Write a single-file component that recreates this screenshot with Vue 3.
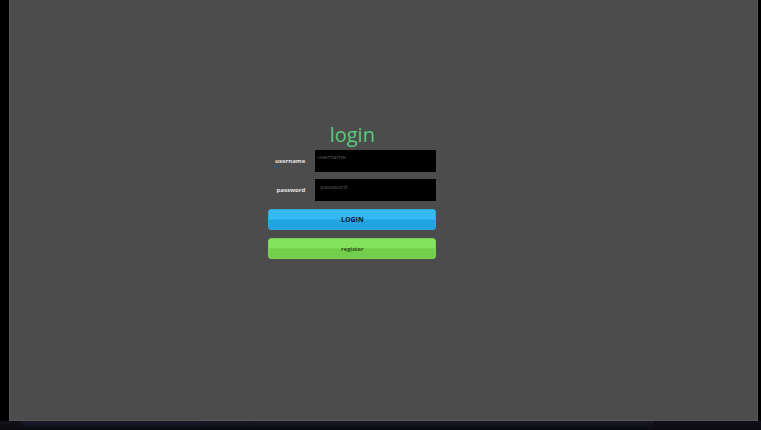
<template>
  <div class="screen">
    <main class="panel">
      <form class="login-form" @submit.prevent>
        <h1 class="title">login</h1>

        <div class="fields">
          <div class="field">
            <label for="username">username</label>
            <input id="username" v-model="username" type="text" placeholder="username" />
          </div>
          <div class="field">
            <label for="password">password</label>
            <input
              id="password"
              v-model="password"
              class="indented"
              type="password"
              placeholder="password"
            />
          </div>
        </div>

        <div class="actions">
          <button class="btn btn-login" type="submit">LOGIN</button>
          <button class="btn btn-register" type="button">register</button>
        </div>
      </form>
    </main>
    <div class="bottom-bar"></div>
  </div>
</template>

<script setup>
import { ref } from "vue";

const username = ref("");
const password = ref("");
</script>

<style>
body {
  background: #000;
}
</style>

<style scoped>
.screen {
  display: flex;
  flex-direction: column;
  min-height: 100vh;
  font-family: "Open Sans", "Noto Sans", sans-serif;
}

.panel {
  flex: 1;
  display: grid;
  grid-template-columns: 29fr 168px 36fr;
  align-items: start;
  box-sizing: border-box;
  margin: 0 3px 0 9px;
  padding-top: 120px;
  background: #4c4c4c;
  border: 1px solid #565656;
  border-width: 0 1px 1px;
}

.login-form {
  grid-column: 2;
}

.title {
  margin: 0;
  font-size: 20px;
  line-height: 30px;
  font-weight: 500;
  text-align: center;
  color: #5cc87c;
}

.fields {
  display: grid;
  gap: 7px;
}

.field {
  display: flex;
  align-items: center;
  gap: 10px;
}

.field label {
  flex: 1;
  font-size: 6px;
  line-height: 8px;
  font-weight: 700;
  text-align: right;
  color: #e4e4e4;
}

.field input {
  box-sizing: border-box;
  width: 121px;
  height: 22px;
  padding: 0 2px 8px;
  border: none;
  border-radius: 0;
  outline: none;
  background: #000;
  color: #ddd;
  font-family: inherit;
  font-size: 6px;
}

.field input.indented {
  padding: 0 5px 6px;
}

.field input::placeholder {
  color: #5c5c5c;
  opacity: 1;
}

.actions {
  display: grid;
  gap: 8px;
  margin-top: 8px;
}

.btn {
  height: 21px;
  padding: 0;
  border: 1px solid;
  border-radius: 3px;
  font-family: inherit;
  font-size: 6px;
  line-height: 8px;
  font-weight: 600;
  cursor: pointer;
}

.btn-login {
  border-color: #30a9e2;
  background: linear-gradient(#35b9f3 45%, #20a5e1 55%);
  color: #041c2c;
  font-size: 7px;
  font-weight: 700;
}

.btn-register {
  border-color: #7bd257;
  background: linear-gradient(#84e25c 45%, #73ce4b 55%);
  color: #1a3a0e;
}

/* Dark strip under the panel */
.bottom-bar {
  height: 9px;
  background:
    linear-gradient(transparent, #080b0d),
    linear-gradient(90deg, #14101c 3%, #1c1c30 3%, #1c1c30 27%, #1c1724 27%, #1c1724 86%, #140e1c 86%);
}
</style>
